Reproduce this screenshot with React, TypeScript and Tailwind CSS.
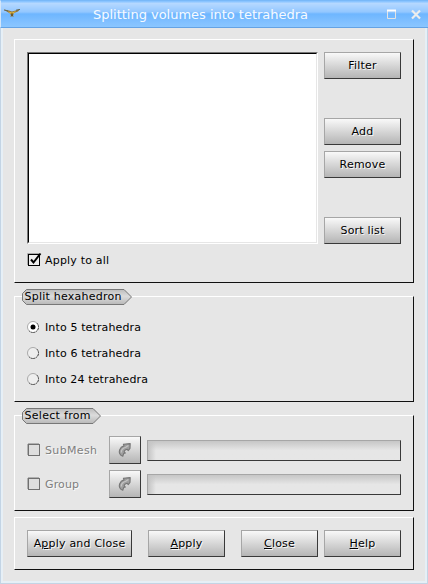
import React from 'react';

const raised =
  'border border-t-[#a6a6a6] border-l-[#a6a6a6] border-r-[#393939] border-b-[#393939] bg-gradient-to-b from-[#f9f9f9] to-[#b5b5b5]';
const panel = 'relative border border-t-white border-l-white border-r-[#101010] border-b-[#101010]';
const embossed = '[text-shadow:1px_1px_0_#f8f8f8]';

function Button({ children, className = 'w-[77px]' }: { children: React.ReactNode; className?: string }) {
  return (
    <button className={`flex h-[27px] shrink-0 items-center justify-center whitespace-nowrap tracking-[0.2px] ${raised} ${embossed} ${className}`}>
      <span>{children}</span>
    </button>
  );
}

function Caption({ text, width, textWidth }: { text: string; width: number; textWidth: number }) {
  return (
    <div className="absolute -top-2 left-[7px] h-4" style={{ width }}>
      <svg className="absolute inset-0" width={width} height="16">
        <defs>
          <linearGradient id={`caption-${width}`} x1="0" y1="0" x2="0" y2="1">
            <stop offset="0" stopColor="#bcbcbc" />
            <stop offset="0.45" stopColor="#dcdcdc" />
            <stop offset="1" stopColor="#b8b8b8" />
          </linearGradient>
        </defs>
        <path
          d={`M4.5 .5H${width - 8}L${width - 0.5} 8L${width - 8} 15.5H4.5L.5 11.5V4.5Z`}
          fill={`url(#caption-${width})`}
          stroke="#777"
        />
        <text x="2.5" y="11" fontSize="11" textLength={textWidth} fill="#000">
          {text}
        </text>
      </svg>
    </div>
  );
}

function Label({ text, width, disabled = false }: { text: string; width: number; disabled?: boolean }) {
  return (
    <svg width={width + 2} height="16" className="shrink-0 overflow-visible">
      {disabled && (
        <text x="1" y="13" fontSize="11" textLength={width} fill="#fafafa">
          {text}
        </text>
      )}
      <text x="0" y="12" fontSize="11" textLength={width} fill={disabled ? '#7e7e7e' : '#000'}>
        {text}
      </text>
    </svg>
  );
}

function Radio({ text, width, checked = false }: { text: string; width: number; checked?: boolean }) {
  return (
    <div className="flex h-[26px] items-center gap-1.5">
      <svg width="12" height="12">
        <circle cx="6" cy="6" r="5.5" fill={checked ? '#fff' : '#eee'} />
        <path d="M2.1 9.9A5.5 5.5 0 0 1 9.9 2.1" fill="none" stroke="#aaa" />
        <path d="M9.9 2.1A5.5 5.5 0 0 1 2.1 9.9" fill="none" stroke="#333" strokeDasharray="2 .6" />
        {checked && <circle cx="6" cy="6" r="2.5" fill="#000" />}
      </svg>
      <Label text={text} width={width} />
    </div>
  );
}

function SourceRow({ text, width }: { text: string; width: number }) {
  return (
    <div className="flex h-7 items-center">
      <div className="flex w-[82px] items-center gap-[5px]">
        <svg width="13" height="13" className="mb-0.5" shapeRendering="crispEdges">
          <path d="M.5 11.5V1.5H1.5V.5H11.5" fill="none" stroke="#b0b0b0" />
          <rect x="1.5" y="1.5" width="11" height="11" fill="#dedede" stroke="#707070" />
        </svg>
        <Label text={text} width={width} disabled />
      </div>
      <button className={`flex h-7 w-8 items-center justify-center ${raised}`}>
        <svg width="16" height="16" viewBox="0 0 16 16">
          <path
            d="M5.8 14.3C3 13.4 1.6 10.6 2.6 8C3.4 5.8 5.2 4.4 7 3.9L6.4 2.3L13.2 1.6L13 6.3L11.2 8.6L10.2 7.2C8.2 7.6 6.8 9 7.3 10.4L8.4 11L6.6 11.6Z"
            fill="#9f9f9f"
            stroke="#757575"
            strokeWidth="1.1"
            strokeLinejoin="round"
          />
          <path d="M4.4 10.5C4 7.8 6.3 6 8.8 5.2L11.4 3.4" fill="none" stroke="#c4c4c4" strokeWidth="1.2" />
        </svg>
      </button>
      <div className="ml-1.5 h-[21px] w-[254px] border border-t-[#a6a6a6] border-l-[#a6a6a6] border-r-[#393939] border-b-[#393939] bg-[#e6e6e6] bg-gradient-to-b from-[#c6c6c6] to-[#e6e6e6] to-50%">
        <div className="h-full w-2 bg-gradient-to-r from-[#c4c4c4] to-transparent" />
      </div>
    </div>
  );
}

export default function App() {
  return (
    <div className="flex h-[584px] w-[428px] flex-col overflow-hidden bg-[#e6e6e6] font-['DejaVu_Sans',sans-serif] text-[11px] leading-[13px] text-black">
      <header className="flex h-7 shrink-0 items-center border-t border-b border-l border-t-[#78b8f8] border-b-[#64a2e4] border-l-[#d5e6f8] bg-[linear-gradient(#8ac4ff_0,#8ac4ff_1px,#b7d9ff_2px,#93c7ff_11px,#6eb6ff_13px,#83c1ff_22px,#8ac6ff_26px)] pl-[3px]">
        <svg width="17" height="12" viewBox="0 0 17 12">
          <path d="M0 1.5L5 2.5L8 3.5L16 1.2L14 3.5L10 5L9 7.5L10 8.5H6L7 7.5L6 5.5L2 3Z" fill="#94783c" />
          <path d="M4 3.5L8 4.5L12 3L9 6H7Z" fill="#e3b83d" />
          <path d="M0 2L4 3M12 2.2L16 1.4" stroke="#656754" />
          <path d="M8 5V8" stroke="#40391f" />
        </svg>
        <svg width="218" height="20" className="ml-[72px]">
          <text x="0" y="15" fontSize="13" textLength="215" fill="#f6faff">
            Splitting volumes into tetrahedra
          </text>
        </svg>
        <svg width="36" height="12" className="mt-0.5 ml-[75px]">
          <path d="M1.5 1.5H9.5V9.5H1.5Z" fill="none" stroke="#e3e3e3" />
          <path d="M1 1.5H10" stroke="white" strokeWidth="2" />
          <path d="M26 1.5L34 9.5M34 1.5L26 9.5" stroke="#ededed" strokeWidth="2.2" />
        </svg>
      </header>
      <div className="flex grow border-r border-b border-l border-[#c3d4e4]">
        <main className="flex grow flex-col border-r-2 border-b-2 border-l-2 border-[#e6eff6] pt-[11px] pl-[11px]">
          <section className={`${panel} h-[244px] w-[400px] pt-3 pl-3`}>
            <div className="flex gap-1.5">
              <div className="h-48 w-[291px] border border-t-[#777] border-l-[#777] border-r-white border-b-white">
                <div className="h-full border border-t-black border-l-black border-r-[#e6e6e6] border-b-[#e6e6e6] bg-white" />
              </div>
              <div className="flex flex-col">
                <Button>Filter</Button>
                <div className="mt-[39px] flex flex-col gap-1.5">
                  <Button>Add</Button>
                  <Button>Remove</Button>
                </div>
                <div className="mt-[39px]">
                  <Button>Sort list</Button>
                </div>
              </div>
            </div>
            <div className="mt-2 flex items-center gap-1">
              <svg width="14" height="16" className="overflow-visible">
                <path d="M.5 13V1.5H12" fill="none" stroke="#aaa" />
                <rect x="1.5" y="2.5" width="11" height="11" fill="#eee" stroke="#000" />
                <path d="M4 7.5L6.5 10.5L13.5 1.5" fill="none" stroke="#000" strokeWidth="2" />
              </svg>
              <Label text="Apply to all" width={64} />
            </div>
          </section>
          <section className={`${panel} mt-[13px] h-[106px] w-[400px] pt-[17px] pl-3`}>
            <Caption text="Split hexahedron" width={110} textWidth={97} />
            <Radio text="Into 5 tetrahedra" width={96} checked />
            <Radio text="Into 6 tetrahedra" width={96} />
            <Radio text="Into 24 tetrahedra" width={103} />
          </section>
          <section className={`${panel} mt-[13px] flex h-24 w-[400px] flex-col gap-1.5 pt-5 pl-3`}>
            <Caption text="Select from" width={79} textWidth={66} />
            <SourceRow text="SubMesh" width={52} />
            <SourceRow text="Group" width={34} />
          </section>
          <section className={`${panel} mt-1.5 flex h-[53px] w-[400px] pt-3 pl-3`}>
            <Button className="w-[105px]">A<u>p</u>ply and Close</Button>
            <Button className="ml-4 w-[77px]"><u>A</u>pply</Button>
            <Button className="ml-4 w-[77px]"><u>C</u>lose</Button>
            <Button className="ml-1.5 w-[77px]"><u>H</u>elp</Button>
          </section>
        </main>
      </div>
    </div>
  );
}
